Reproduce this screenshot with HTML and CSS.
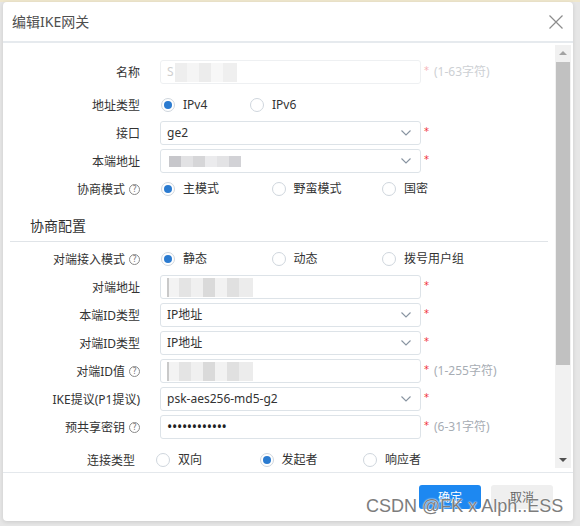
FILE: index.html
```html
<!DOCTYPE html>
<html lang="zh-CN">
<head>
<meta charset="utf-8">
<title>编辑IKE网关</title>
<link rel="stylesheet" href="styles.css">
</head>
<body>
<div class="modal">
  <div class="modal-header">
    <span class="title">编辑IKE网关</span>
    <svg class="close" width="14" height="14" viewBox="0 0 14 14"><path d="M0.5 0.5L13.5 13.5M13.5 0.5L0.5 13.5" stroke="#8c8c8c" stroke-width="1.2" fill="none"/></svg>
  </div>
  <div class="modal-body">
    <div class="scroll-content">
      <div class="row first">
        <label class="lbl">名称</label>
        <div class="ctrl disabled"><span class="faint-char">S</span><span class="blur blur-name"></span></div>
        <span class="req faint">*</span><span class="hint faint">(1-63字符)</span>
      </div>
      <div class="row">
        <label class="lbl">地址类型</label>
        <div class="radios">
          <span class="opt w89"><span class="radio checked"></span>IPv4</span>
          <span class="opt w89"><span class="radio"></span>IPv6</span>
        </div>
      </div>
      <div class="row">
        <label class="lbl">接口</label>
        <div class="ctrl select"><span class="val">ge2</span><svg class="chev" width="10" height="6" viewBox="0 0 10 6"><path d="M0.5 0.5L5 5L9.5 0.5" stroke="#8894a1" stroke-width="1.1" fill="none"/></svg></div>
        <span class="req">*</span>
      </div>
      <div class="row">
        <label class="lbl">本端地址</label>
        <div class="ctrl select"><span class="blur blur-local"></span><svg class="chev" width="10" height="6" viewBox="0 0 10 6"><path d="M0.5 0.5L5 5L9.5 0.5" stroke="#8894a1" stroke-width="1.1" fill="none"/></svg></div>
        <span class="req">*</span>
      </div>
      <div class="row">
        <label class="lbl">协商模式<span class="qmark">?</span></label>
        <div class="radios">
          <span class="opt w110"><span class="radio checked"></span>主模式</span>
          <span class="opt w110"><span class="radio"></span>野蛮模式</span>
          <span class="opt w110"><span class="radio"></span>国密</span>
        </div>
      </div>

      <div class="section-title">协商配置</div>

      <div class="row after-title">
        <label class="lbl">对端接入模式<span class="qmark">?</span></label>
        <div class="radios">
          <span class="opt w110"><span class="radio checked"></span>静态</span>
          <span class="opt w110"><span class="radio"></span>动态</span>
          <span class="opt w110"><span class="radio"></span>拨号用户组</span>
        </div>
      </div>
      <div class="row">
        <label class="lbl">对端地址</label>
        <div class="ctrl"><span class="blur blur-peer"></span></div>
        <span class="req">*</span>
      </div>
      <div class="row">
        <label class="lbl">本端ID类型</label>
        <div class="ctrl select"><span class="val">IP地址</span><svg class="chev" width="10" height="6" viewBox="0 0 10 6"><path d="M0.5 0.5L5 5L9.5 0.5" stroke="#8894a1" stroke-width="1.1" fill="none"/></svg></div>
        <span class="req">*</span>
      </div>
      <div class="row">
        <label class="lbl">对端ID类型</label>
        <div class="ctrl select"><span class="val">IP地址</span><svg class="chev" width="10" height="6" viewBox="0 0 10 6"><path d="M0.5 0.5L5 5L9.5 0.5" stroke="#8894a1" stroke-width="1.1" fill="none"/></svg></div>
        <span class="req">*</span>
      </div>
      <div class="row">
        <label class="lbl">对端ID值<span class="qmark">?</span></label>
        <div class="ctrl"><span class="blur blur-peer"></span></div>
        <span class="req">*</span><span class="hint">(1-255字符)</span>
      </div>
      <div class="row">
        <label class="lbl">IKE提议(P1提议)</label>
        <div class="ctrl select"><span class="val">psk-aes256-md5-g2</span><svg class="chev" width="10" height="6" viewBox="0 0 10 6"><path d="M0.5 0.5L5 5L9.5 0.5" stroke="#8894a1" stroke-width="1.1" fill="none"/></svg></div>
        <span class="req">*</span>
      </div>
      <div class="row">
        <label class="lbl">预共享密钥<span class="qmark">?</span></label>
        <div class="ctrl"><span class="val dots">••••••••••••</span></div>
        <span class="req">*</span><span class="hint">(6-31字符)</span>
      </div>
      <div class="row conn">
        <label class="lbl">连接类型</label>
        <div class="radios">
          <span class="opt w104"><span class="radio"></span>双向</span>
          <span class="opt w104"><span class="radio checked"></span>发起者</span>
          <span class="opt w104"><span class="radio"></span>响应者</span>
        </div>
      </div>
    </div>
    <div class="scrollbar">
      <span class="sb-btn"><span class="tri up"></span></span>
      <div class="sb-track"><div class="sb-thumb"></div></div>
      <span class="sb-btn"><span class="tri down"></span></span>
    </div>
  </div>
  <div class="modal-footer">
    <button class="btn primary">确定</button>
    <button class="btn">取消</button>
  </div>
  <div class="watermark">CSDN @FK x Alph..ESS</div>
</div>
</body>
</html>
```

FILE: styles.css
```css
html, body {
  margin: 0;
  padding: 0;
}
body {
  width: 580px;
  height: 526px;
  overflow: hidden;
  background: linear-gradient(#efe7cd 0, #efe7cd 2px, #e6e6e6 2px);
  padding-top: 2px;
  box-sizing: border-box;
  font-family: "Noto Sans", "Noto Sans CJK SC", sans-serif;
  font-size: 12px;
  color: #333;
}
.modal {
  position: relative;
  margin-left: 3px;
  width: 570px;
  height: 519px;
  background: #fff;
  border-radius: 4px;
  box-shadow: 0 1px 4px rgba(0, 0, 0, 0.12);
  display: flex;
  flex-direction: column;
  overflow: hidden;
}
.modal-header {
  height: 39px;
  border-bottom: 2px solid #e6eaee;
  display: flex;
  align-items: center;
  padding: 0 10px 0 9px;
  flex: none;
}
.title {
  font-family: "Noto Sans", "Noto Sans CJK SC", sans-serif;
  font-size: 14px;
  color: #4f4f4f;
  line-height: 18px;
  margin-top: 1px;
}
.close {
  margin-left: auto;
}
.modal-body {
  height: 429px;
  box-sizing: border-box;
  padding: 2px 2px 4px 0;
  display: flex;
  flex: none;
}
.scroll-content {
  flex: 1;
  overflow: hidden;
  padding-top: 13px;
}
.row {
  height: 28px;
  display: flex;
  align-items: center;
}
.row.first {
  margin-bottom: 5px;
}
.lbl {
  width: 137px;
  flex: none;
  text-align: right;
  margin-right: 20px;
  line-height: 16px;
  color: #333;
  display: flex;
  justify-content: flex-end;
  align-items: center;
  padding-top: 1px;
}
.qmark {
  display: inline-flex;
  width: 9px;
  height: 9px;
  border: 1px solid #8a8a8a;
  border-radius: 50%;
  font-size: 8px;
  line-height: 9px;
  justify-content: center;
  color: #777;
  margin-left: 4px;
  font-family: "DejaVu Sans", sans-serif;
}
.ctrl {
  width: 261px;
  height: 24px;
  box-sizing: border-box;
  border: 1px solid #dde3e8;
  border-radius: 3px;
  padding: 0 9px 0 6px;
  display: flex;
  align-items: center;
  flex: none;
}
.ctrl.disabled {
  border-color: #eef0f2;
}
.val {
  line-height: 16px;
  color: #333;
}
.dots {
  font-size: 14px;
  letter-spacing: -0.3px;
  color: #222;
}
.faint-char {
  color: #cfcfcf;
  line-height: 16px;
}
.chev {
  margin-left: auto;
}
.req {
  color: #f0303a;
  margin-left: 3px;
  padding-bottom: 3px;
  line-height: 10px;
  font-size: 10px;
  font-family: "DejaVu Sans", sans-serif;
}
.req.faint {
  color: #f6b5b8;
}
.hint {
  margin-left: 5px;
  color: #a7adb4;
  line-height: 16px;
}
.hint.faint {
  color: #cdd0d4;
}
.radios {
  display: flex;
  margin-left: 1px;
}
.opt {
  display: flex;
  align-items: center;
  line-height: 16px;
  color: #333;
}
.w89 { width: 89px; }
.w110 { width: 110.5px; }
.w104 { width: 103.5px; }
.radio {
  width: 14px;
  height: 14px;
  box-sizing: border-box;
  border: 1px solid #cfd6dd;
  border-radius: 50%;
  margin-right: 8px;
  position: relative;
  flex: none;
}
.radio.checked::after {
  content: "";
  position: absolute;
  left: 2px;
  top: 2px;
  width: 8px;
  height: 8px;
  border-radius: 50%;
  background: #2b7bd0;
}
.section-title {
  margin: 0 7px;
  padding: 13px 0 5px 20px;
  font-size: 14px;
  line-height: 20px;
  color: #333;
  border-bottom: 1px solid #e0e4e8;
}
.row.after-title {
  margin-top: 3px;
}
.row.conn {
  margin-top: 5px;
}
.row.conn .lbl {
  width: 132px;
}
.blur {
  display: block;
  filter: blur(0.6px);
}
.blur-name {
  width: 62px;
  height: 19px;
  margin-left: 1px;
  background: linear-gradient(to right, #eeeeee 0 12px, #f5f5f5 12px 24px, #ececec 24px 36px, #f7f7f7 36px 48px, #efefef 48px 62px);
}
.blur-local {
  width: 72px;
  height: 11px;
  margin-left: 2px;
  background: linear-gradient(to right, #c7c7cb 0 12px, #e2e2e4 12px 24px, #d6d6d8 24px 36px, #ebebed 36px 48px, #e3e3e5 48px 60px, #d2d2d6 60px 72px);
}
.blur-peer {
  width: 86px;
  height: 19px;
  background: linear-gradient(to right, #c9c9c9 0 2px, #f3f3f3 2px 12px, #e4e4e4 12px 24px, #f0f0f0 24px 36px, #dadada 36px 48px, #f2f2f2 48px 60px, #e0e0e0 60px 72px, #ececec 72px 86px);
}
.scrollbar {
  width: 16px;
  flex: none;
  background: #f1f1f1;
  display: flex;
  flex-direction: column;
}
.sb-btn {
  height: 16px;
  flex: none;
  display: flex;
  align-items: center;
  justify-content: center;
}
.tri {
  width: 0;
  height: 0;
  border-left: 4px solid transparent;
  border-right: 4px solid transparent;
}
.tri.up {
  border-bottom: 4px solid #a3a3a3;
}
.tri.down {
  border-top: 4px solid #505050;
}
.sb-track {
  flex: 1;
  padding: 1px 1px 0 1px;
}
.sb-thumb {
  height: 303px;
  background: #c1c1c1;
}
.modal-footer {
  flex: 1;
  border-top: 1px solid #e4e8ec;
  display: flex;
  justify-content: flex-end;
  align-items: flex-start;
  padding: 12px 20px 0 0;
  gap: 10px;
}
.btn {
  width: 62px;
  height: 24px;
  border: none;
  border-radius: 3px;
  background: #efefef;
  color: #666;
  font-family: "Noto Sans", "Noto Sans CJK SC", sans-serif;
  font-size: 12px;
  padding: 0;
}
.btn.primary {
  background: #1d88f1;
  color: #fff;
}
.watermark {
  position: absolute;
  left: 363px;
  top: 493px;
  font-family: "Liberation Sans", Arial, sans-serif;
  font-size: 18px;
  line-height: 22px;
  color: #7d7d7d;
  text-shadow: 0 0 2px #fff, 0 0 1px #fff;
  white-space: nowrap;
}
```
